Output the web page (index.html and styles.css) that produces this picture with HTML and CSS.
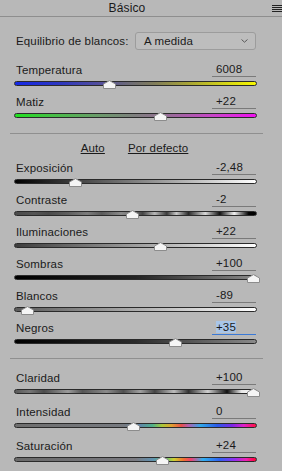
FILE: index.html
```html
<!DOCTYPE html>
<html lang="es">
<head>
<meta charset="utf-8">
<title>Básico</title>
<link rel="stylesheet" href="styles.css">
</head>
<body>
<div class="panel">
  <div class="header">
    <span class="title">Básico</span>
    <svg class="menu" width="10" height="8" viewBox="0 0 10 8"><g fill="#222"><rect x="0" y="0" width="10" height="1"/><rect x="0" y="2" width="10" height="1"/><rect x="0" y="4" width="10" height="1"/><rect x="0" y="6" width="10" height="1"/></g></svg>
  </div>

  <div class="wb">
    <span class="wb-label">Equilibrio de blancos:</span>
    <div class="select">
      <span>A medida</span>
      <svg class="chev" width="7" height="4" viewBox="0 0 7 4"><polyline points="0.5,0.5 3.5,3.2 6.5,0.5" fill="none" stroke="#5a5a5a" stroke-width="1"/></svg>
    </div>
  </div>

  <div class="group group-wb">
    <div class="slider">
      <div class="head"><span class="label">Temperatura</span><span class="value">6008</span></div>
      <div class="track t-temp"><svg class="thumb" style="--p:39.5%" width="13" height="9" viewBox="0 0 13 9"><polygon points="0.5,8.5 0.5,4 6.5,0.6 12.5,4 12.5,8.5" fill="#f5f5f5" stroke="#8c8c8c"/></svg></div>
    </div>
    <div class="slider">
      <div class="head"><span class="label">Matiz</span><span class="value">+22</span></div>
      <div class="track t-tint"><svg class="thumb" style="--p:60.5%" width="13" height="9" viewBox="0 0 13 9"><polygon points="0.5,8.5 0.5,4 6.5,0.6 12.5,4 12.5,8.5" fill="#f5f5f5" stroke="#8c8c8c"/></svg></div>
    </div>
  </div>

  <hr class="sep sep1">

  <div class="links"><a class="link">Auto</a><a class="link">Por defecto</a></div>

  <div class="group group-tone">
    <div class="slider">
      <div class="head"><span class="label">Exposición</span><span class="value">-2,48</span></div>
      <div class="track t-expo"><svg class="thumb" style="--p:25.2%" width="13" height="9" viewBox="0 0 13 9"><polygon points="0.5,8.5 0.5,4 6.5,0.6 12.5,4 12.5,8.5" fill="#f5f5f5" stroke="#8c8c8c"/></svg></div>
    </div>
    <div class="slider">
      <div class="head"><span class="label">Contraste</span><span class="value">-2</span></div>
      <div class="track t-contrast"><svg class="thumb" style="--p:49%" width="13" height="9" viewBox="0 0 13 9"><polygon points="0.5,8.5 0.5,4 6.5,0.6 12.5,4 12.5,8.5" fill="#f5f5f5" stroke="#8c8c8c"/></svg></div>
    </div>
    <div class="slider">
      <div class="head"><span class="label">Iluminaciones</span><span class="value">+22</span></div>
      <div class="track t-high"><svg class="thumb" style="--p:60.5%" width="13" height="9" viewBox="0 0 13 9"><polygon points="0.5,8.5 0.5,4 6.5,0.6 12.5,4 12.5,8.5" fill="#f5f5f5" stroke="#8c8c8c"/></svg></div>
    </div>
    <div class="slider">
      <div class="head"><span class="label">Sombras</span><span class="value">+100</span></div>
      <div class="track t-shadow"><svg class="thumb" style="--p:99%" width="13" height="9" viewBox="0 0 13 9"><polygon points="0.5,8.5 0.5,4 6.5,0.6 12.5,4 12.5,8.5" fill="#f5f5f5" stroke="#8c8c8c"/></svg></div>
    </div>
    <div class="slider">
      <div class="head"><span class="label">Blancos</span><span class="value">-89</span></div>
      <div class="track t-white"><svg class="thumb" style="--p:5.5%" width="13" height="9" viewBox="0 0 13 9"><polygon points="0.5,8.5 0.5,4 6.5,0.6 12.5,4 12.5,8.5" fill="#f5f5f5" stroke="#8c8c8c"/></svg></div>
    </div>
    <div class="slider">
      <div class="head"><span class="label">Negros</span><span class="value value-active"><span class="sel">+35</span></span></div>
      <div class="track t-black"><svg class="thumb" style="--p:67%" width="13" height="9" viewBox="0 0 13 9"><polygon points="0.5,8.5 0.5,4 6.5,0.6 12.5,4 12.5,8.5" fill="#f5f5f5" stroke="#8c8c8c"/></svg></div>
    </div>
  </div>

  <hr class="sep sep2">

  <div class="group group-presence">
    <div class="slider slider-tall">
      <div class="head"><span class="label">Claridad</span><span class="value">+100</span></div>
      <div class="track t-clarity"><svg class="thumb" style="--p:99%" width="13" height="9" viewBox="0 0 13 9"><polygon points="0.5,8.5 0.5,4 6.5,0.6 12.5,4 12.5,8.5" fill="#f5f5f5" stroke="#8c8c8c"/></svg></div>
    </div>
    <div class="slider slider-tall">
      <div class="head"><span class="label">Intensidad</span><span class="value">0</span></div>
      <div class="track t-vib"><svg class="thumb" style="--p:49.5%" width="13" height="9" viewBox="0 0 13 9"><polygon points="0.5,8.5 0.5,4 6.5,0.6 12.5,4 12.5,8.5" fill="#f5f5f5" stroke="#8c8c8c"/></svg></div>
    </div>
    <div class="slider slider-tall">
      <div class="head"><span class="label">Saturación</span><span class="value">+24</span></div>
      <div class="track t-sat"><svg class="thumb" style="--p:61.3%" width="13" height="9" viewBox="0 0 13 9"><polygon points="0.5,8.5 0.5,4 6.5,0.6 12.5,4 12.5,8.5" fill="#f5f5f5" stroke="#8c8c8c"/></svg></div>
    </div>
  </div>
</div>
</body>
</html>
```

FILE: styles.css
```css
html, body {
  margin: 0;
  padding: 0;
  background: #b8b8b8;
  overflow: hidden;
}

.panel {
  width: 282px;
  height: 471px;
  background: #b8b8b8;
  color: #1a1a1a;
  font-family: "Liberation Sans", Arial, sans-serif;
  font-size: 11.5px;
  letter-spacing: 0.15px;
  overflow: hidden;
}

/* header */
.header {
  display: flex;
  align-items: center;
  height: 16px;
  border-bottom: 1px solid #8e8e8e;
}
.title {
  flex: 0 0 254px;
  text-align: center;
  line-height: 16px;
  font-size: 12px;
}
.menu {
  display: block;
  margin-left: auto;
  margin-top: 1px;
}

/* white balance */
.wb {
  display: flex;
  align-items: center;
  height: 18px;
  margin-top: 15px;
  padding-left: 16px;
}
.wb-label {
  line-height: 14px;
}
.select {
  margin-left: auto;
  margin-right: 26px;
  width: 121px;
  height: 18px;
  box-sizing: border-box;
  border: 1px solid #9c9c9c;
  border-radius: 3px;
  background: #bdbdbd;
  display: flex;
  align-items: center;
  padding: 0 7px 0 8px;
  line-height: 14px;
}
.chev {
  display: block;
  margin-left: auto;
}

/* groups */
.group-wb {
  margin-top: 12px;
}

.slider {
  height: 32px;
}
.slider-tall {
  height: 34px;
}

.head {
  display: flex;
  justify-content: space-between;
  align-items: flex-end;
  padding-left: 16px;
  margin-right: 26px;
  line-height: 14px;
}
.value {
  width: 44px;
  box-sizing: border-box;
  padding-left: 4px;
  border-bottom: 1px solid #7a7a7a;
}
.value-active {
  border-bottom-color: #3a79d6;
}
.sel {
  background: #a9c6e9;
}

.track {
  position: relative;
  height: 5px;
  box-sizing: border-box;
  margin: 4px 25px 0 14px;
  border: 1px solid #2a2a2a;
  border-radius: 2.5px;
}
.thumb {
  position: absolute;
  top: -2px;
  left: calc(var(--p) - 7px);
  display: block;
}

.t-temp {
  background: linear-gradient(90deg, #1428e6 0%, #2b35c0 18%, #55509a 36%, #6c6a78 47%, #817d5a 58%, #a8a437 72%, #d6d616 88%, #f7f700 100%);
}
.t-tint {
  background: linear-gradient(90deg, #1fe01f 0%, #45c045 15%, #6b9a6b 35%, #7f7f7f 50%, #9a6a9a 65%, #c845c8 82%, #f010f0 100%);
}
.t-expo {
  background: linear-gradient(90deg, #000 0%, #fff 100%);
}
.t-contrast {
  background: linear-gradient(90deg, #4a4a4a 0%, #555 8%, #4a4a4a 14%, #5e5e5e 22%, #7c7c7c 30%, #5a5a5a 36%, #8a8a8a 44%, #6a6a6a 50%, #444 53%, #b8b8b8 58%, #3a3a3a 63%, #c8c8c8 67%, #2a2a2a 72%, #d8d8d8 79%, #111 85%, #f2f2f2 91%, #000 97%, #000 100%);
}
.t-high {
  background: linear-gradient(90deg, #3c3c3c 0%, #fff 100%);
}
.t-shadow {
  background: linear-gradient(90deg, #000 0%, #222 50%, #8a8a8a 100%);
}
.t-white {
  background: linear-gradient(90deg, #5a5a5a 0%, #fff 100%);
}
.t-black {
  background: linear-gradient(90deg, #000 0%, #2a2a2a 50%, #8a8a8a 100%);
}
.t-clarity {
  background: linear-gradient(90deg, #585858 0%, #777 6%, #4c4c4c 12%, #9a9a9a 22%, #555 28%, #8a8a8a 38%, #505050 45%, #a0a0a0 52%, #444 58%, #bdbdbd 66%, #333 72%, #d0d0d0 80%, #111 88%, #e8e8e8 94%, #fff 100%);
}
.t-vib {
  background: linear-gradient(90deg, #6e6e6e 0%, #777a80 45%, #5e86a8 52%, #4fb08a 57%, #a8c83a 61%, #e0a030 65%, #e8504a 69%, #b060b0 72%, #30a8e8 77%, #2a5ae8 84%, #7a28e8 90%, #e020c8 95%, #ff1040 100%);
}
.t-sat {
  background: linear-gradient(90deg, #6a6a6a 0%, #7a7a80 50%, #6090b0 57%, #50c080 62%, #d0d030 66%, #f07030 70%, #f04070 73%, #30b0f0 78%, #3060f0 85%, #9030f0 91%, #f020b0 96%, #ff0030 100%);
}

/* separators & links */
.sep {
  border: none;
  height: 1px;
  background: #8f8f8f;
  margin: 0 19px 0 10px;
}
.sep1 {
  margin-top: 7px;
}
.sep2 {
  margin-top: 6px;
  margin-bottom: 11px;
}

.links {
  display: flex;
  justify-content: center;
  gap: 23px;
  padding: 7px 13px 5px 0;
  line-height: 14px;
}
.link {
  text-decoration: underline;
  text-underline-offset: 1px;
  color: #1a1a1a;
}
```
